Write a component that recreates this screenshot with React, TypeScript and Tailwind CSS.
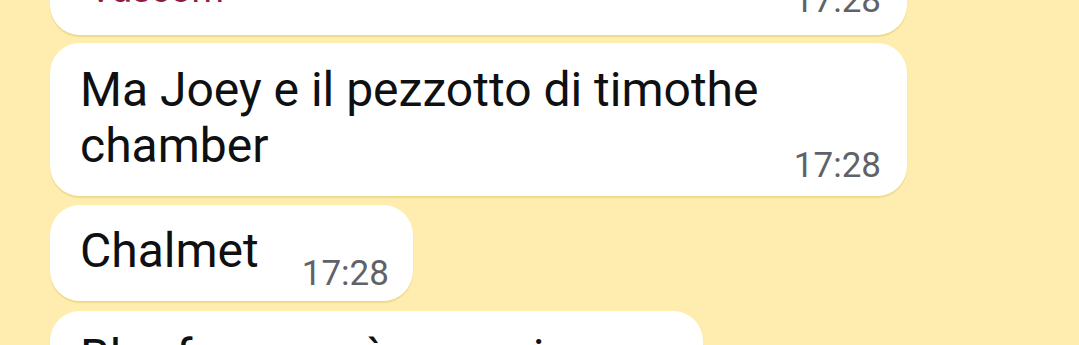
export default function App() {
  const time = "text-[35px] leading-[40px] text-[#5f6368] whitespace-nowrap";
  const bubble =
    "rounded-[30px] bg-white shadow-[0_2px_1px_rgba(190,150,20,0.22)]";
  return (
    <div className="w-[1079px] h-[345px] overflow-hidden bg-[#feedaf] font-['Roboto',sans-serif]">
      <div className="flex flex-col items-start pl-[50px]">
        <div
          className={`${bubble} -mt-[51px] w-[857px] pl-[31px] pr-[26px] pt-[19px] pb-[14px] flex items-end justify-between`}
        >
          <span className="text-[37px] leading-[44px] text-[#8c1d3f] mb-[9px] ml-[8px]">
            Vascom
          </span>
          <span className={time}>17:28</span>
        </div>

        <div
          className={`${bubble} mt-[8px] w-[857px] pl-[30px] pr-[26px] pt-[19px] pb-[10px] flex flex-col`}
        >
          <p className="text-[48px] leading-[56px] text-[#0e1012]">
            Ma Joey e il pezzotto di timothe chamber
          </p>
          <div className="flex justify-end -mt-[28px]">
            <span className={time}>17:28</span>
          </div>
        </div>

        <div
          className={`${bubble} mt-[9px] pl-[30px] pr-[24px] pt-[18px] pb-[7px] flex items-end`}
        >
          <span className="text-[48px] leading-[56px] text-[#0e1012] mb-[15px]">
            Chalmet
          </span>
          <span className={`${time} ml-[43px]`}>17:28</span>
        </div>

        <div
          className={`${bubble} mt-[10px] pl-[30px] pr-[26px] pt-[18px] pb-[6px] flex flex-col`}
        >
          <span className="text-[48px] leading-[56px] text-[#0e1012] whitespace-nowrap">
            Bho fa come è un amico ma
          </span>
          <div className="flex justify-end">
            <span className={time}>17:29</span>
          </div>
        </div>
      </div>
    </div>
  );
}
